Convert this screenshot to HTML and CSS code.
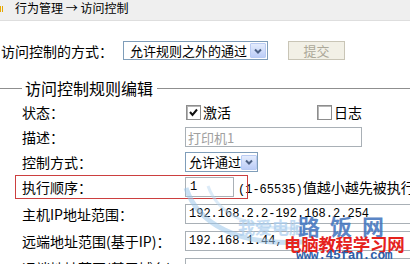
FILE: index.html
```html
<!DOCTYPE html>
<html lang="zh-CN">
<head>
  <meta charset="UTF-8" />
  <title>访问控制</title>
  <link rel="stylesheet" href="styles.css">
</head>
<body>
  <div class="crumb">
    <span class="crumb-icon"></span>
    <span>行为管理 → 访问控制</span>
  </div>

  <div class="mode-row">
    <div class="mode-label">访问控制的方式：</div>
    <div class="select wide">
      <span class="select-text">允许规则之外的通过</span>
      <span class="select-arrow"><svg width="8" height="6" viewBox="0 0 8 6"><polyline points="1,1.5 4,4.5 7,1.5" fill="none" stroke="#4d6185" stroke-width="2"/></svg></span>
    </div>
    <div class="btn-submit">提交</div>
  </div>

  <div class="legend">
    <span class="legend-line short"></span>
    <span class="legend-text">访问控制规则编辑</span>
    <span class="legend-line"></span>
  </div>

  <div class="rules">
    <div class="row">
      <div class="label">状态：</div>
      <div class="check-item first">
        <span class="check"><svg width="11" height="11" viewBox="0 0 11 11"><polyline points="2,5 4.5,8 9,2.5" fill="none" stroke="#111" stroke-width="2"/></svg></span>
        <span>激活</span>
      </div>
      <div class="check-item">
        <span class="check"></span>
        <span>日志</span>
      </div>
    </div>

    <div class="row">
      <div class="label">描述：</div>
      <div class="input desc">打印机1</div>
    </div>

    <div class="row">
      <div class="label">控制方式：</div>
      <div class="select small">
        <span class="select-text">允许通过</span>
        <span class="select-arrow"><svg width="8" height="6" viewBox="0 0 8 6"><polyline points="1,1.5 4,4.5 7,1.5" fill="none" stroke="#4d6185" stroke-width="2"/></svg></span>
      </div>
    </div>

    <div class="row">
      <div class="highlight"></div>
      <div class="label">执行顺序：</div>
      <div class="input order"><span class="m">1</span></div>
      <div class="hint"><span class="m">(1-65535)</span>值越小越先被执行</div>
    </div>

    <div class="row loose">
      <div class="label">主机IP地址范围：</div>
      <div class="input long"><span class="m">192.168.2.2-192.168.2.254</span></div>
    </div>

    <div class="row loose">
      <div class="label">远端地址范围(基于IP)：</div>
      <div class="input long"><span class="m">192.168.1.44,</span></div>
    </div>

    <div class="row loose">
      <div class="label">远端地址范围(基于域名)：</div>
      <div class="input long"></div>
    </div>
  </div>

  <div class="watermark">
    <svg class="wm-swoosh" width="130" height="80" viewBox="0 0 130 80">
      <path d="M8 4 C 20 40, 60 62, 125 58" fill="none" stroke="#9cc6ea" stroke-width="5" opacity="0.55"/>
      <path d="M30 2 C 40 30, 70 46, 120 44" fill="none" stroke="#b9d8f2" stroke-width="3" opacity="0.5"/>
    </svg>
    <span class="wm-faint">我爱电脑</span>
    <span class="wm-site">路&nbsp;&nbsp;饭&nbsp;&nbsp;网</span>
    <span class="wm-red">电脑教程学习网</span>
    <span class="wm-url">www.45fan.com</span>
  </div>
</body>
</html>
```

FILE: styles.css
```css
* {
  margin: 0;
  padding: 0;
  box-sizing: border-box;
}
body {
  font-family: "Noto Sans CJK SC", "Liberation Sans", sans-serif;
  font-size: 14px;
  color: #000;
  background: #fff;
  width: 410px;
  height: 264px;
  overflow: hidden;
  position: relative;
}
.m {
  font-family: "Liberation Mono", monospace;
  font-size: 12px;
}

/* Breadcrumb */
.crumb {
  height: 21px;
  background: #efefef;
  border-bottom: 1px solid #dedede;
  display: flex;
  align-items: flex-start;
  font-size: 12px;
  line-height: 16px;
}
.crumb-icon {
  width: 4px;
  height: 6px;
  margin-top: 6px;
  margin-right: 11px;
  background: repeating-linear-gradient(90deg, #e8a800 0 1px, transparent 1px 2px);
}

/* Top mode row */
.mode-row {
  display: flex;
  align-items: center;
  height: 19px;
  margin-top: 20px;
}
.mode-label {
  width: 123px;
  padding-left: 1px;
}
.select {
  height: 19px;
  border: 1px solid #7f9db9;
  background: #fff;
  display: flex;
  align-items: center;
  justify-content: space-between;
  font-size: 13px;
  white-space: nowrap;
  flex: none;
}
.select.wide { width: 145px; }
.select.small { width: 73px; height: 20px; }
.select-text {
  padding-left: 6px;
  line-height: 16px;
}
.select.small .select-text { padding-left: 3px; }
.select-arrow {
  flex: none;
  width: 16px;
  height: 15px;
  margin-right: 1px;
  border: 1px solid #b9cbf3;
  border-radius: 1px;
  background: linear-gradient(#e4ecfd, #bccdf7);
  display: flex;
  align-items: center;
  justify-content: center;
}
.btn-submit {
  width: 57px;
  height: 19px;
  margin-left: 20px;
  background: #f2f0e6;
  border: 1px solid #c9c5b6;
  color: #aca899;
  font-size: 13px;
  line-height: 17px;
  text-align: center;
}

/* Legend */
.legend {
  display: flex;
  align-items: center;
  height: 18px;
  margin-top: 19px;
}
.legend-line {
  flex: 1;
  height: 1px;
  background: #8f8f8f;
}
.legend-line.short {
  flex: none;
  width: 22px;
}
.legend-text {
  font-size: 16px;
  line-height: 18px;
  padding: 0 4px 0 3px;
}

/* Rule rows */
.rules {
  margin-top: 5px;
  display: flex;
  flex-direction: column;
  gap: 5px;
}
.row {
  position: relative;
  display: flex;
  align-items: center;
  height: 20px;
  padding-left: 22px;
}
.row.loose { margin-top: 2px; }
.label {
  width: 163px;
  flex: none;
  white-space: nowrap;
  line-height: 18px;
}
.check-item {
  display: flex;
  align-items: center;
}
.check-item.first {
  width: 131px;
  margin-left: 1px;
}
.check {
  width: 15px;
  height: 15px;
  margin-right: 2px;
  border: 1px solid #8d8d8d;
  box-shadow: inset 1px 1px 0 #b5b5b5;
  background: #fff;
  display: flex;
  align-items: center;
  justify-content: center;
}
.input {
  height: 20px;
  border: 1px solid #a9b0b6;
  background: #fff;
  display: flex;
  align-items: center;
  padding-left: 3px;
  white-space: nowrap;
  flex: none;
}
.input.desc {
  width: 177px;
  color: #a0a0a0;
  font-size: 13px;
  padding-left: 2px;
}
.input.order {
  width: 49px;
  padding-left: 4px;
}
.input.long { width: 240px; }
.hint {
  margin-left: 4px;
  white-space: nowrap;
}
.highlight {
  position: absolute;
  left: 15px;
  top: -2px;
  width: 233px;
  height: 24px;
  border: 1px solid #cc3f3f;
}

/* Watermark overlay */
.watermark {
  position: absolute;
  left: 0;
  top: 0;
  width: 410px;
  height: 264px;
  pointer-events: none;
}
.wm-swoosh {
  position: absolute;
  left: 178px;
  top: 184px;
}
.wm-faint {
  position: absolute;
  left: 238px;
  top: 214px;
  font-size: 17px;
  font-weight: bold;
  color: #a9cdee;
  opacity: 0.7;
}
.wm-site {
  position: absolute;
  left: 298px;
  top: 210px;
  font-size: 22px;
  font-weight: bold;
  color: #3f72bd;
  opacity: 0.85;
  line-height: 30px;
}
.wm-red {
  position: absolute;
  left: 284px;
  top: 234px;
  font-size: 17.5px;
  font-weight: bold;
  color: #e5221c;
  line-height: 20px;
  letter-spacing: -0.3px;
}
.wm-url {
  position: absolute;
  left: 296px;
  top: 249px;
  font-family: "Liberation Mono", monospace;
  font-size: 13px;
  font-weight: bold;
  color: #2d5ea8;
  line-height: 14px;
  letter-spacing: -0.4px;
}
```
